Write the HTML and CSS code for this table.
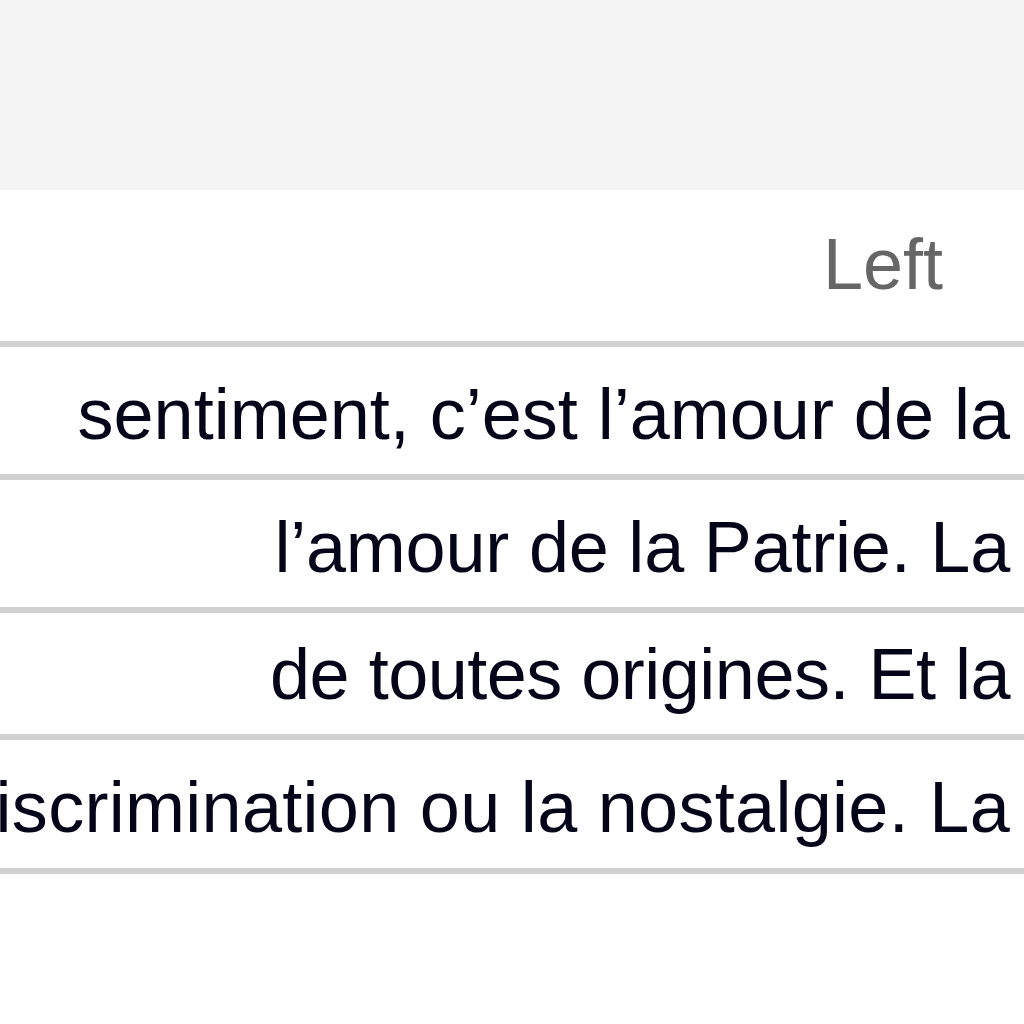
FILE: index.html
```html
<!DOCTYPE html>
<html>
<head>
<meta charset="utf-8">
<link rel="stylesheet" href="styles.css">
</head>
<body>
<div class="page">
  <div class="band"></div>
  <div class="table">
    <div class="row head"><span class="cell">Left</span></div>
    <div class="row r1"><span class="cell">sentiment, c’est l’amour de la</span></div>
    <div class="row r2"><span class="cell">l’amour de la Patrie. La</span></div>
    <div class="row r3"><span class="cell">de toutes origines. Et la</span></div>
    <div class="row r4"><span class="cell">discrimination ou la nostalgie. La</span></div>
  </div>
</div>
</body>
</html>
```
FILE: styles.css
```css
html, body {
  margin: 0;
  padding: 0;
  background: #ffffff;
}
.page {
  width: 1024px;
  height: 1024px;
  overflow: hidden;
  font-family: "Liberation Sans", Arial, sans-serif;
  font-size: 72px;
  line-height: 72px;
}
.band {
  height: 190px;
  background: #f4f4f4;
}
.table {
  display: flex;
  flex-direction: column;
}
.row {
  display: flex;
  justify-content: flex-end;
  box-sizing: border-box;
  border-bottom: 6px solid #d0d0d0;
  white-space: nowrap;
  color: #05051a;
  padding-right: 14px;
  padding-top: 31px;
}
.cell {
  flex: none;
}
.head {
  height: 157px;
  padding-top: 38px;
  padding-right: 81px;
  color: #666666;
}
.r1 { height: 133px; }
.r2 { height: 133px; letter-spacing: -0.2px; }
.r3 { height: 127px; padding-top: 25px; letter-spacing: -0.5px; }
.r4 { height: 134px; letter-spacing: 0.3px; }
```
